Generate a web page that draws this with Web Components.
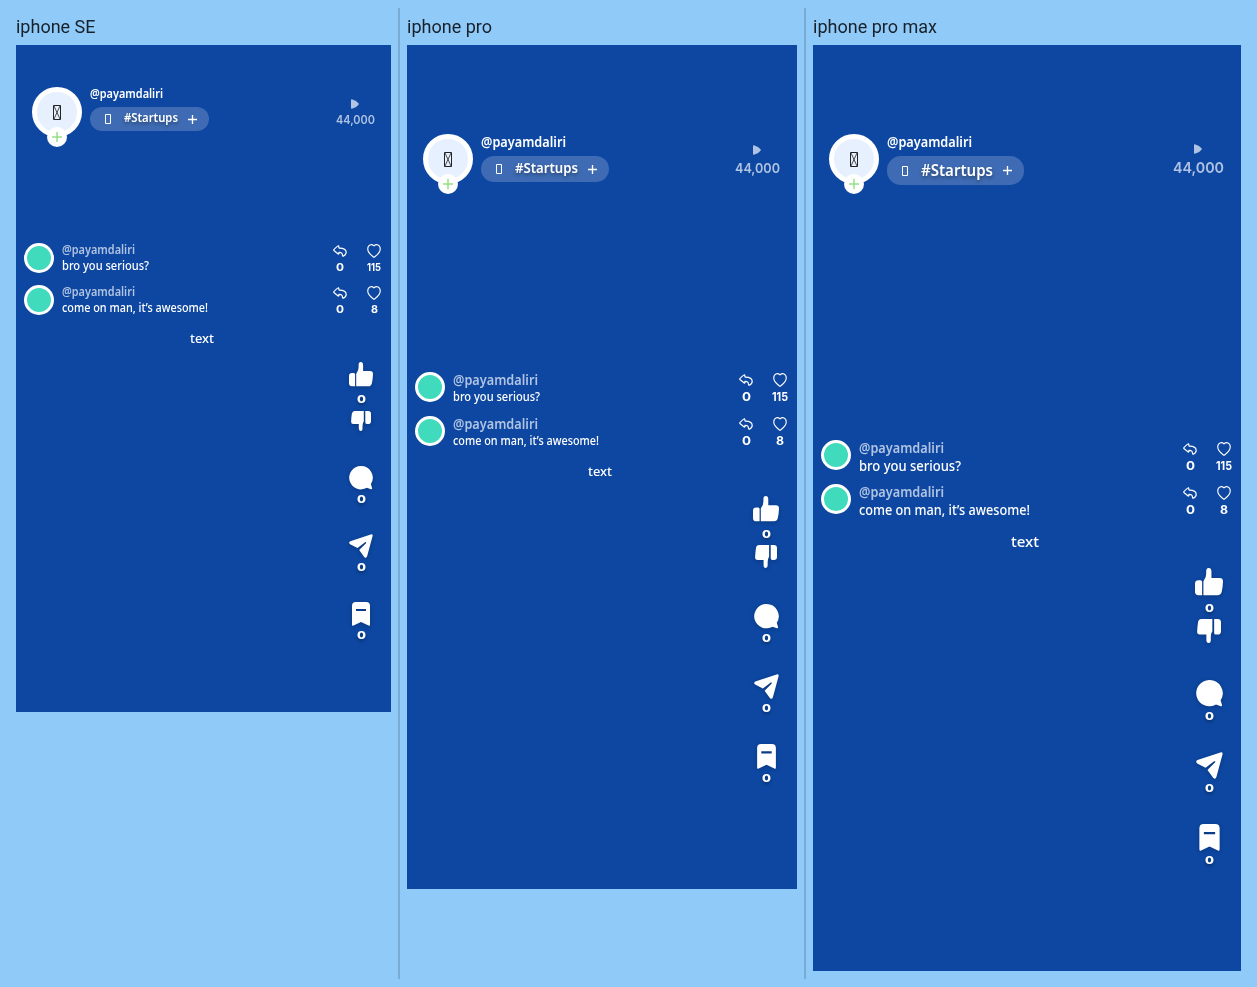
<!DOCTYPE html>
<html lang="en">
<head>
<meta charset="utf-8">
<title>Device previews</title>
<style>
html,body{margin:0;height:100%;background:#90caf9}
</style>
</head>
<body>
<device-board></device-board>
<script>
const make = (host, html) => {
  const t = document.createElement('template');
  t.innerHTML = html;
  const r = host.attachShadow({mode: 'open'});
  r.append(t.content.cloneNode(true));
  return r;
};

/* A line of text whose advance is scaled to a given width. */
customElements.define('fit-text', class extends HTMLElement {
  connectedCallback() {
    if (this.shadowRoot) return;
    const w = +this.getAttribute('w'), s = +this.getAttribute('size'), h = +(this.getAttribute('h') || 16);
    const r = make(this, `<style>:host{display:block;flex:none;width:${w}px;height:${h}px;font-size:${s}px;line-height:${h}px;white-space:nowrap}
      span{display:inline-block;vertical-align:top;transform-origin:0 50%}</style><span><slot></slot></span>`);
    const span = r.querySelector('span');
    span.style.transform = `scaleX(${w / span.getBoundingClientRect().width})`;
  }
});

const ICONS = {
  like: ['0 0 24 25', '<path fill="currentColor" d="M3 11h1.700q1.400 0 1.400 1.600v11.700H3Q0 24.300 0 21.300V14q0-3 3-3zM7.200 12.500q0-1 .6-1.800Q9.600 8.500 9.600 5V3q0-3 2.200-3t2.300 3v6H21q3 0 3 3-.2 5.500-1.100 9.200-.7 3.100-3.600 3.100H7.200z"/>'],
  dislike: ['0 0 20 20', '<path fill="currentColor" d="M3.600 0h9.200v10.300q-1.300 1.800-1.300 4.600v3Q11.500 20 9.700 20q-1.900 0-1.900-2.400V13H2.300Q0 13 .1 10.500.3 6 .9 2.500 1.400 0 3.600 0zM14.300 0h2.800Q20 0 20 2.800v7.400q0 2.800-2.900 2.800h-1.400q-1.400 0-1.400-1.400z"/>'],
  comment: ['0 0 24 24', '<path fill="currentColor" d="M11.700 0a11.700 11.700 0 0 1 10.200 18l1.200 4.300q.2 1.200-1.100 1l-4.200-1.500A11.700 11.700 0 1 1 11.700 0z"/>'],
  send: ['0 0 24 24', '<path fill="currentColor" d="M1.300 7.200 21.700.4q2.300-.6 1.900 1.700L18.200 22q-.8 2.800-2.800 1.200L10.200 16l6.600-6.600q1.100-1.600-.7-1.200L8.500 14 1.100 10.200Q-.9 8.500 1.300 7.200z"/>'],
  bookmark: ['0 0 24 24', '<path fill="currentColor" fill-rule="evenodd" d="M6.800 0h10.400Q21 0 21 3.800v18.700q0 1.800-1.500 1L12 20l-7.500 3.500Q3 24.300 3 22.500V3.800Q3 0 6.800 0zM7 7v2h10V7z"/>'],
  reply: ['0 0 14 12', '<path fill="none" stroke="currentColor" stroke-width="1.200" stroke-linejoin="round" d="M5.600.8Q5 .4.900 4.600q-.4.500 0 .9L5.200 9q.7.300.7-.4V7.300c2.800-.2 3.600 1.200 3.600 3.200q0 .8.800.6Q13.300 9.800 13.200 7.200C13 4.500 10 3 6.100 3.100z"/>'],
  heart: ['0 0 15 14', '<path fill="none" stroke="currentColor" stroke-width="1.200" stroke-linejoin="round" d="M7.500 1.900C4.900-.4.800.7.800 4.900c0 3.700 3.700 6.300 6 8q.7.500 1.400 0c2.300-1.700 6-4.300 6-8C14.200.7 10.100-.4 7.500 1.900z"/>'],
  play: ['0 0 8 10', '<path fill="currentColor" d="M0 1.200Q0-.4 1.500.4 5.400 1.500 7.700 4.600q.3.500 0 .9-2 3-6.200 4.100Q0 10.300 0 8.800z"/>'],
  plus: ['0 0 10 10', '<path stroke="currentColor" stroke-width="1.500" d="M5 0v10M0 5h10"/>'],
  tofu: ['0 0 7 10', '<path fill="none" stroke="currentColor" d="M1.500 .5h5v9h-5z"/>'],
  tofux: ['0 0 8 15', '<path fill="none" stroke="currentColor" d="M.5 .5h7v14h-7z"/><path fill="none" stroke="currentColor" stroke-width=".8" d="m1 1 6 13m0-13-6 13"/>']
};
customElements.define('app-icon', class extends HTMLElement {
  connectedCallback() {
    if (this.shadowRoot) return;
    const [vb, body] = ICONS[this.getAttribute('name')];
    make(this, `<style>:host{display:block;flex:none;width:${this.getAttribute('w')}px;height:${this.getAttribute('h')}px}svg{display:block;width:100%;height:100%;overflow:visible}</style>
      <svg viewBox="${vb}" preserveAspectRatio="none">${body}</svg>`);
  }
});

customElements.define('user-avatar', class extends HTMLElement {
  connectedCallback() {
    make(this, `<style>
      :host{display:flex;position:relative;flex:none;box-sizing:border-box;width:50px;height:50px;border:5px solid #fff;border-radius:50%;background:#e6f0ff;align-items:center;justify-content:center;color:#222}
      .add{position:absolute;left:10px;top:35px;width:20px;height:20px;border-radius:50%;background:#fff;display:flex;align-items:center;justify-content:center;color:#98e086}
      </style><app-icon name="tofux" w="8" h="15"></app-icon><div class="add"><app-icon name="plus" w="10" h="10"></app-icon></div>`);
  }
});

customElements.define('topic-pill', class extends HTMLElement {
  connectedCallback() {
    make(this, `<style>
      :host{display:flex;box-sizing:border-box;align-items:center;width:${this.getAttribute('w')}px;height:${this.getAttribute('h')}px;border-radius:14px;padding-left:14px;background:#3e6bb3;color:#fff}
      .label{margin:-2px 10px 0 13px;font-weight:600;text-shadow:0 2px 4px rgba(0,0,0,.4)}
      </style><app-icon name="tofu" w="7" h="10"></app-icon><div class="label"><slot></slot></div><app-icon name="plus" w="9" h="9"></app-icon>`);
  }
});

customElements.define('comment-row', class extends HTMLElement {
  connectedCallback() {
    const a = n => +this.getAttribute(n);
    const likes = this.getAttribute('likes');
    const z = a('num');
    make(this, `<style>
      :host{display:flex;height:30px;color:#fff}
      .dot{box-sizing:border-box;width:30px;height:30px;border:3px solid #fff;border-radius:50%;background:#40dbbc;margin-right:8px;flex:none}
      .body{flex:1;padding-top:${a('shift')}px}
      .name{color:#b0c3e2;font-weight:600}
      .msg{margin-top:${a('gap')}px;font-weight:500}
      .act{width:34px;display:flex;flex-direction:column;align-items:center;font-weight:700;font-family:Inter,sans-serif}
      .ic{flex:none;height:14px;margin:${a('ictop')}px 0 ${a('icgap')}px;display:flex;align-items:center}
      </style>
      <div class="dot"></div>
      <div class="body"><fit-text class="name" w="${a('nw')}" size="${a('ns')}" h="14"><slot name="name"></slot></fit-text>
      <fit-text class="msg" w="${a('mw')}" size="${a('ms')}" h="16"><slot></slot></fit-text></div>
      <div class="act"><div class="ic"><app-icon name="reply" w="14" h="12"></app-icon></div><fit-text w="${z > 11.5 ? 9 : 8}" size="${z}" h="16">0</fit-text></div>
      <div class="act"><div class="ic"><app-icon name="heart" w="14" h="14"></app-icon></div><fit-text w="${likes.length > 1 ? (z > 11.5 ? 16 : 14) : (z > 11.5 ? 8 : 7)}" size="${z}" h="16">${likes}</fit-text></div>`);
  }
});

customElements.define('action-rail', class extends HTMLElement {
  connectedCallback() {
    const a = n => +this.getAttribute(n);
    const s = a('s'), l = a('like'), d = a('dislike');
    const zero = `<fit-text w="9" size="11" h="12">0</fit-text>`;
    make(this, `<style>
      :host{display:flex;flex-direction:column;align-items:center;width:30px;color:#fff;font-family:Inter,sans-serif;font-weight:800;text-shadow:0 2px 3px rgba(0,0,0,.35)}
      app-icon{filter:drop-shadow(0 1px 2px rgba(0,0,0,.22))}
      .vote,.item{display:flex;flex-direction:column;align-items:center}
      .vote{gap:6px;margin-bottom:${a('votegap')}px}
      .vote app-icon:last-child{margin-top:${a('dm')}px}
      .item{gap:3px;margin-bottom:${a('gap')}px}
      </style>
      <div class="vote"><app-icon name="like" w="${l}" h="${a('lh')}"></app-icon>${zero}<app-icon name="dislike" w="${d}" h="${a('dh')}"></app-icon></div>
      ${['comment', 'send', 'bookmark'].map(n => `<div class="item"><app-icon name="${n}" w="${s}" h="${s}"></app-icon>${zero}</div>`).join('')}`);
  }
});

const SIZES = {
  se: {w:375,h:667,top:42,nw:73,ns:12,nh:14,mt:6,pw:119,ph:24,tw:54,ts:12,cw:39,cs:11.5,vm:3,cr:16,ct:12,
    cy:106,row:12,shift:0,gap:1,ictop:1,icgap:1,cns:12,cnw:73,cms:12,bw:87,mw:146,num:11,
    tm:15,tsz:13,txw:24,rt:16,rail:'s="24" like="24" lh="25" dislike="20" dh="20" dm="0" votegap="35" gap="29"',rr:15},
  pro: {w:390,h:844,top:89,nw:85,ns:13.5,nh:16,mt:6,pw:128,ph:26,tw:63,ts:14,cw:45,cs:13,vm:5,cr:17,ct:11,
    cy:188,row:14,shift:1,gap:2,ictop:1,icgap:2,cns:13.5,cnw:85,cms:12,bw:87,mw:146,num:12,
    tm:17,txw:24,tsz:13,rt:17,rail:'s="25" like="26" lh="26" dislike="22" dh="23" dm="-1" votegap="36" gap="30"',rr:16},
  max: {w:428,h:926,top:89,nw:85,ns:13.5,nh:16,mt:6,pw:137,ph:29,tw:72,ts:16,cw:51,cs:15,vm:6,cr:17,ct:10,
    cy:256,row:14,shift:1,gap:3,ictop:2,icgap:2,cns:13.5,cnw:85,cms:13.5,bw:102,mw:171,num:12,
    tm:19,txw:28,tsz:15,rt:19,rail:'s="27" like="28" lh="28" dislike="24" dh="24" dm="-1" votegap="37" gap="30"',rr:17}
};

customElements.define('phone-preview', class extends HTMLElement {
  connectedCallback() {
    const c = SIZES[this.getAttribute('model')];
    const row = (mw, likes, text) => `<comment-row nw="${c.cnw}" ns="${c.cns}" mw="${mw}" ms="${c.cms}" shift="${c.shift}" gap="${c.gap}" ictop="${c.ictop}" icgap="${c.icgap}" num="${c.num}" likes="${likes}"><span slot="name">@payamdaliri</span>${text}</comment-row>`;
    make(this, `<style>
      :host{display:flex;flex-direction:column;box-sizing:border-box;width:${c.w}px;height:${c.h}px;background:#0d47a1;color:#fff;padding-top:${c.top}px;font-family:"Noto Sans","Open Sans",sans-serif}
      header{display:flex;height:50px;padding:0 ${c.cr}px 0 16px;gap:8px}
      .who{flex:1}
      .name{font-weight:600}
      topic-pill{margin-top:${c.mt}px}
      .views{display:flex;flex-direction:column;align-items:center;color:#b0c3e2;font-family:Inter,sans-serif;font-weight:600;padding-top:${c.ct}px}
      .views app-icon{margin-right:1px}
      .views fit-text{margin-top:${c.vm}px}
      .list{display:flex;flex-direction:column;gap:${c.row}px;margin-top:${c.cy}px;padding:0 0 0 8px}
      .caption{align-self:center;margin:${c.tm}px 4px 0 0;font-weight:500}
      action-rail{align-self:flex-end;margin:${c.rt}px ${c.rr}px 0 0}
      </style>
      <header><user-avatar></user-avatar>
        <div class="who"><fit-text class="name" w="${c.nw}" size="${c.ns}" h="${c.nh}">@payamdaliri</fit-text>
        <topic-pill w="${c.pw}" h="${c.ph}"><fit-text w="${c.tw}" size="${c.ts}" h="18">#Startups</fit-text></topic-pill></div>
        <div class="views"><app-icon name="play" w="8" h="10"></app-icon><fit-text w="${c.cw}" size="${c.cs}">44,000</fit-text></div>
      </header>
      <div class="list">${row(c.bw, '115', 'bro you serious?')}${row(c.mw, '8', 'come on man, it’s awesome!')}</div>
      <fit-text class="caption" w="${c.txw}" size="${c.tsz}">text</fit-text>
      <action-rail ${c.rail}></action-rail>`);
  }
});

customElements.define('device-board', class extends HTMLElement {
  connectedCallback() {
    make(this, `<style>
      :host{display:flex;box-sizing:border-box;height:987px;padding:8px 8px 8px 9px;background:#90caf9;overflow:hidden}
      section{padding:8px 7px 0 7px;border-right:2px solid #7aabd3;flex:none}
      section:last-child{border:0}
      section:first-child{width:375px}
      h2{margin:0;height:29px;font:400 18px/22px Roboto,sans-serif;color:#17212a}
      </style>
      <section><h2><fit-text w="79.500" size="18" h="22">iphone SE</fit-text></h2><phone-preview model="se"></phone-preview></section>
      <section><h2><fit-text w="85" size="18" h="22">iphone pro</fit-text></h2><phone-preview model="pro"></phone-preview></section>
      <section><h2><fit-text w="124" size="18" h="22">iphone pro max</fit-text></h2><phone-preview model="max"></phone-preview></section>`);
  }
});
</script>
</body>
</html>
